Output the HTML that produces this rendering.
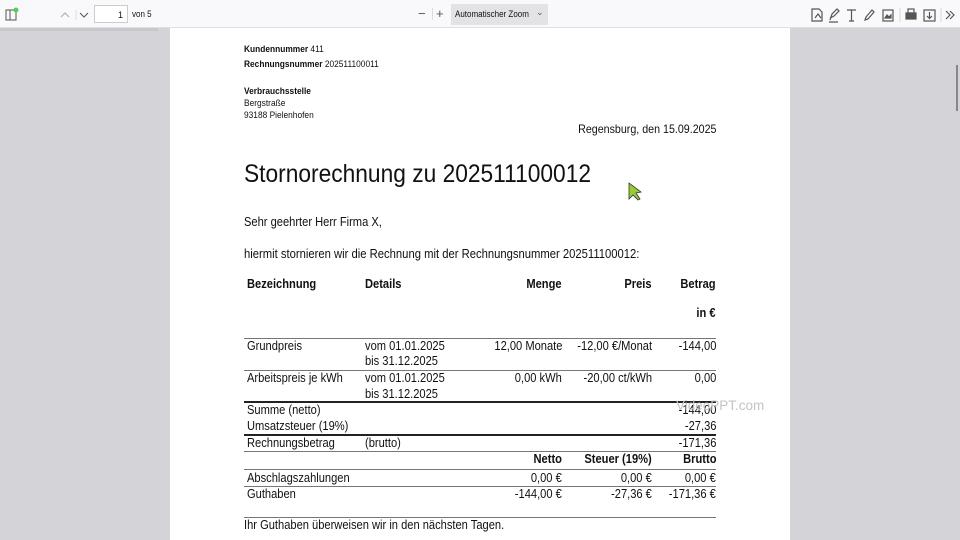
<!DOCTYPE html>
<html><head><meta charset="utf-8"><style>
*{margin:0;padding:0;box-sizing:border-box}
body{width:960px;height:540px;overflow:hidden;background:#d4d4d8;font-family:"Liberation Sans",sans-serif;position:relative;color:#111}
#tb{position:absolute;left:0;top:0;width:960px;height:28px;background:#f9f9fb;border-bottom:1px solid #e0e0e4}
#page{position:absolute;left:170px;top:28px;width:620px;height:512px;background:#fff}
.t{position:absolute;white-space:nowrap;line-height:1;transform:scaleX(.89);transform-origin:left center;font-size:12.5px}
.r{position:absolute;white-space:nowrap;line-height:1;transform:scaleX(.89);transform-origin:right center;font-size:12.5px;text-align:right}
.b{font-weight:bold}
.s{font-size:9.5px;transform:scaleX(.88)}
.ln{position:absolute;left:244px;width:472px;height:1px;background:#777}
.tk{height:2px;background:#222}
.ic{position:absolute;color:#555;font-size:13px;line-height:1}
</style></head><body>
<div id="tb">
 <svg style="position:absolute;left:5px;top:7px" width="14" height="14"><rect x="1" y="3" width="10" height="10" fill="none" stroke="#555"/><line x1="5" y1="3" x2="5" y2="13" stroke="#555"/><circle cx="11" cy="3" r="2.5" fill="#5c5"/></svg>
 <svg style="position:absolute;left:60px;top:9px" width="40" height="12"><path d="M1 8l4-4 4 4" fill="none" stroke="#aaa"/><line x1="16" y1="1" x2="16" y2="11" stroke="#ddd"/><path d="M20 4l4 4 4-4" fill="none" stroke="#555"/></svg>
 <div style="position:absolute;left:94px;top:5px;width:34px;height:18px;border:1px solid #ccc;background:#fff;font-size:9px;text-align:right;padding:4px 4px 0 0">1</div>
 <div class="t" style="left:132px;top:10px;font-size:9px">von 5</div>
 <div class="ic" style="left:418px;top:7px">−</div>
 <div style="position:absolute;left:432px;top:8px;width:1px;height:12px;background:#ddd"></div>
 <div class="ic" style="left:436px;top:7px">+</div>
 <div style="position:absolute;left:451px;top:4px;width:97px;height:21px;background:#e3e3e6"></div>
 <div class="t" style="left:455px;top:10px;font-size:9px">Automatischer Zoom</div>
 <div class="ic" style="left:536px;top:8px;font-size:9px">⌄</div>
 <svg style="position:absolute;left:810px;top:7px" width="150" height="16" fill="none" stroke="#555" stroke-width="1.2">
  <path d="M2 2h7l3 3v9H2z M5 11l3-4 3 4"/>
  <path d="M20 13l2-6 5-5 2 2-5 5-4 2 M19 15h9"/>
  <path d="M37 3h9 M41.5 3v11 M39 14h5"/>
  <path d="M55 13l1-3 6-7 2 2-6 7z"/>
  <rect x="73" y="3" width="10" height="11"/><path d="M75 11l2-3 2 2 2-2v3z" fill="#555"/>
  <line x1="90" y1="1" x2="90" y2="15" stroke="#ddd"/>
  <rect x="96" y="6" width="10" height="6" fill="#555"/><rect x="98" y="2" width="6" height="4"/>
  <rect x="114" y="3" width="11" height="11"/><path d="M119.5 5v6 M117 9l2.5 2.5 2.5-2.5"/>
  <line x1="131" y1="1" x2="131" y2="15" stroke="#ddd"/>
  <path d="M136 4l4 4-4 4 M140 4l4 4-4 4"/>
 </svg>
</div>
<div style="position:absolute;left:956px;top:65px;width:2px;height:46px;background:#888"></div>
<div style="position:absolute;left:0;top:28px;width:158px;height:3px;background:#c8c8cc"></div>
<div id="page"></div>
<div class="t s" style="left:244px;top:45px"><b>Kundennummer</b> 411</div>
<div class="t s" style="left:244px;top:60px"><b>Rechnungsnummer</b> 202511100011</div>
<div class="t s b" style="left:244px;top:87px">Verbrauchsstelle</div>
<div class="t s" style="left:244px;top:99px">Bergstraße</div>
<div class="t s" style="left:244px;top:111px">93188 Pielenhofen</div>
<div class="r" style="right:244px;top:123px;font-size:12px">Regensburg, den 15.09.2025</div>
<div class="t" style="left:244px;top:162px;font-size:25px;transform:scaleX(.91)">Stornorechnung zu 202511100012</div>
<svg style="position:absolute;left:628px;top:182px" width="14" height="20"><path d="M1 1v16l4-4 5 5 2-1-4-6 5-1z" fill="#9c3" stroke="#333" stroke-width=".8"/></svg>
<div class="t" style="left:244px;top:216px">Sehr geehrter Herr Firma X,</div>
<div class="t" style="left:244px;top:248px;transform:scaleX(.9)">hiermit stornieren wir die Rechnung mit der Rechnungsnummer 202511100012:</div>
<div class="t b" style="left:247px;top:278px">Bezeichnung</div>
<div class="t b" style="left:365px;top:278px">Details</div>
<div class="r b" style="right:398px;top:278px">Menge</div>
<div class="r b" style="right:308px;top:278px">Preis</div>
<div class="r b" style="right:244px;top:278px">Betrag</div>
<div class="r b" style="right:244px;top:307px">in €</div>
<div class="ln" style="top:338px"></div>
<div class="t" style="left:247px;top:340px">Grundpreis</div>
<div class="t" style="left:365px;top:340px">vom 01.01.2025</div>
<div class="t" style="left:365px;top:355px">bis 31.12.2025</div>
<div class="r" style="right:398px;top:340px">12,00 Monate</div>
<div class="r" style="right:308px;top:340px">-12,00 €/Monat</div>
<div class="r" style="right:244px;top:340px">-144,00</div>
<div class="ln" style="top:370px"></div>
<div class="t" style="left:247px;top:372px">Arbeitspreis je kWh</div>
<div class="t" style="left:365px;top:372px">vom 01.01.2025</div>
<div class="t" style="left:365px;top:388px">bis 31.12.2025</div>
<div class="r" style="right:398px;top:372px">0,00 kWh</div>
<div class="r" style="right:308px;top:372px">-20,00 ct/kWh</div>
<div class="r" style="right:244px;top:372px">0,00</div>
<div class="ln tk" style="top:401px"></div>
<div class="t" style="left:247px;top:404px">Summe (netto)</div>
<div class="r" style="right:244px;top:404px">-144,00</div>
<div class="t" style="left:676px;top:399px;color:#c4c4c4;font-size:13.5px;transform:none">VideoPPT.com</div>
<div class="t" style="left:247px;top:420px">Umsatzsteuer (19%)</div>
<div class="r" style="right:244px;top:420px">-27,36</div>
<div class="ln tk" style="top:434px"></div>
<div class="t" style="left:247px;top:437px">Rechnungsbetrag</div>
<div class="t" style="left:365px;top:437px">(brutto)</div>
<div class="r" style="right:244px;top:437px">-171,36</div>
<div class="ln" style="top:451px"></div>
<div class="r b" style="right:398px;top:453px">Netto</div>
<div class="r b" style="right:308px;top:453px">Steuer (19%)</div>
<div class="r b" style="right:244px;top:453px">Brutto</div>
<div class="ln" style="top:469px"></div>
<div class="t" style="left:247px;top:472px">Abschlagszahlungen</div>
<div class="r" style="right:398px;top:472px">0,00 €</div>
<div class="r" style="right:308px;top:472px">0,00 €</div>
<div class="r" style="right:244px;top:472px">0,00 €</div>
<div class="ln" style="top:486px"></div>
<div class="t" style="left:247px;top:488px">Guthaben</div>
<div class="r" style="right:398px;top:488px">-144,00 €</div>
<div class="r" style="right:308px;top:488px">-27,36 €</div>
<div class="r" style="right:244px;top:488px">-171,36 €</div>
<div class="ln" style="top:517px"></div>
<div class="t" style="left:244px;top:519px">Ihr Guthaben überweisen wir in den nächsten Tagen.</div>
</body></html>
